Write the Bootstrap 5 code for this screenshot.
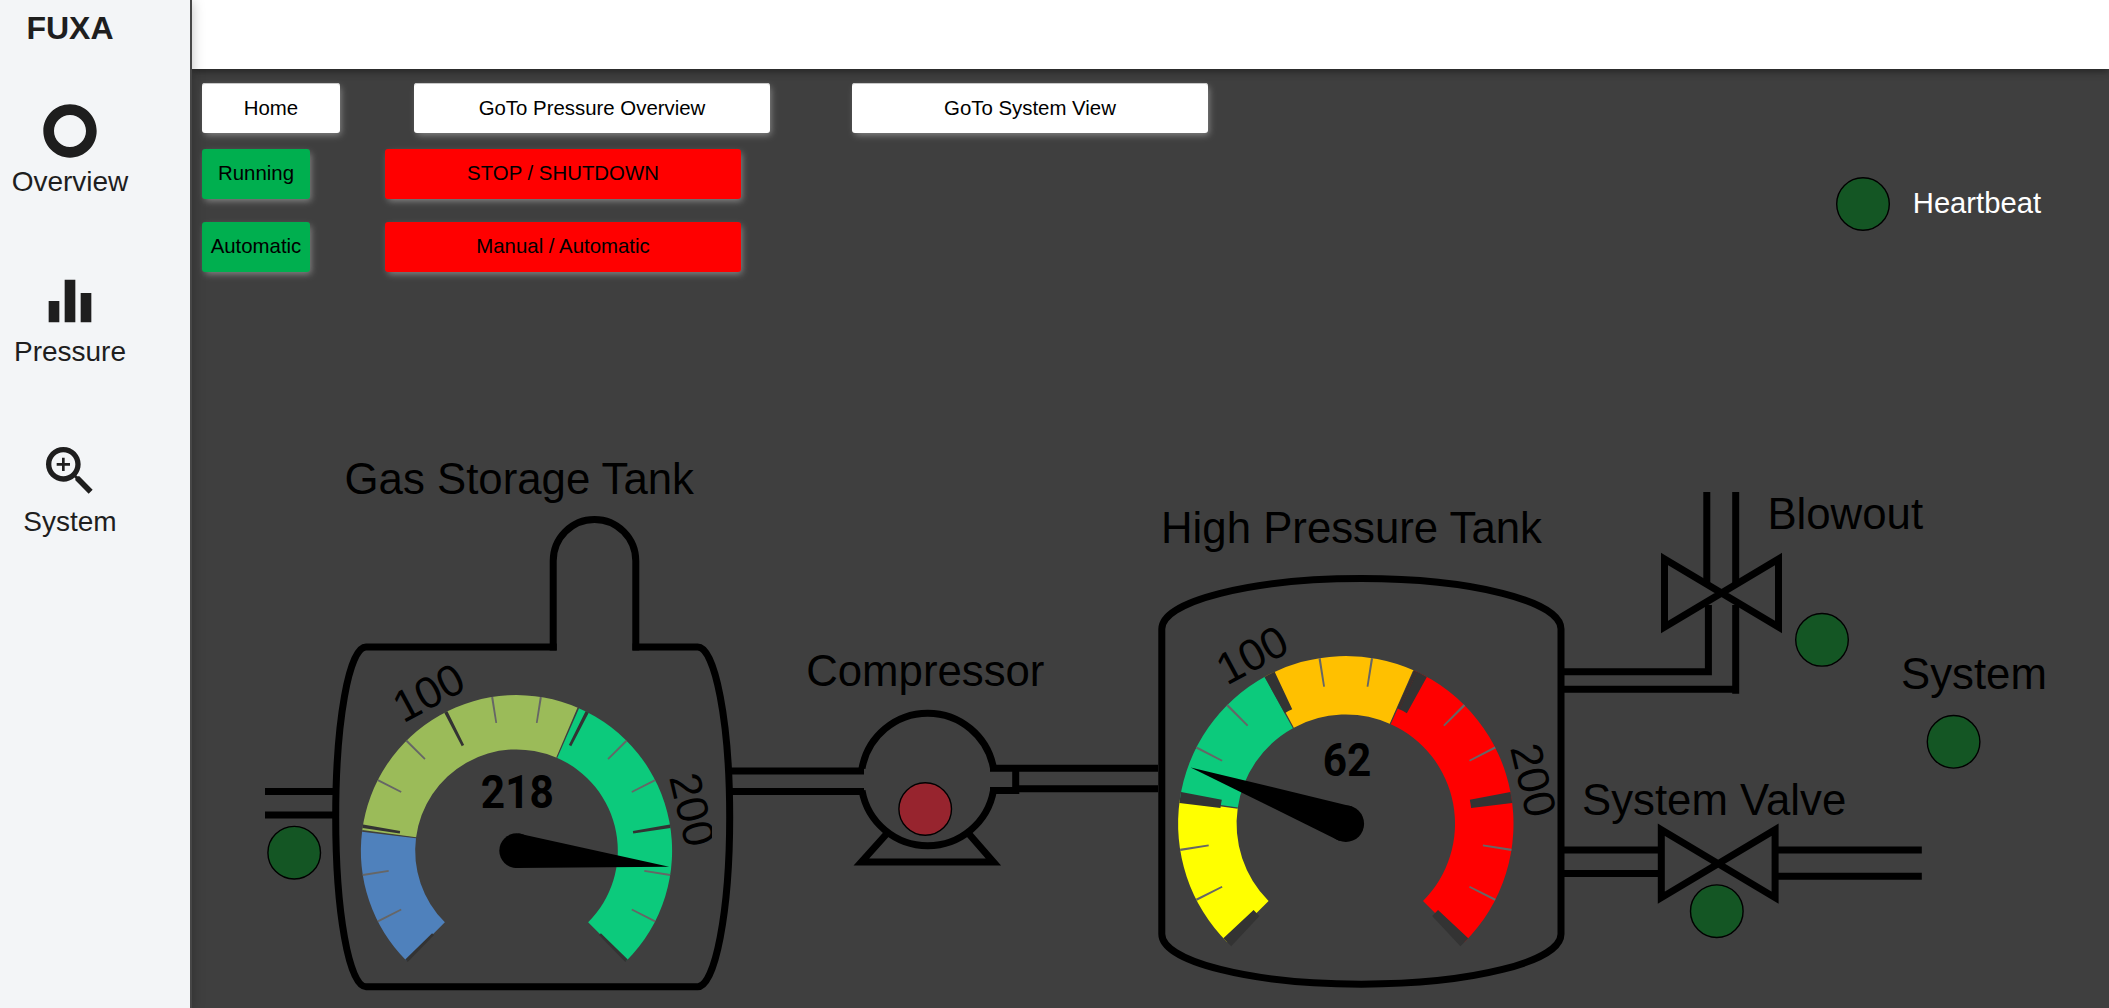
<!DOCTYPE html>
<html lang="en">
<head>
<meta charset="utf-8">
<meta name="viewport" content="width=device-width, initial-scale=1">
<title>FUXA</title>
<link href="https://cdn.jsdelivr.net/npm/bootstrap@5.3.0/dist/css/bootstrap.min.css" rel="stylesheet">
<style>
  body { font-family: "Liberation Sans", Arial, sans-serif; background: #3f3f3f; }
  .side-menu { width: 192px; background: #f3f5f7; border-right: 2px solid #474747; color: #1e1e1e; z-index: 3; box-shadow: 0 2px 12px rgba(0,0,0,.25); }
  .side-brand { width: 140px; height: 69px; font-size: 32px; line-height: 56px; }
  .side-item { width: 140px; height: 170px; padding-top: 30px; font-size: 28px; line-height: 38px; color: #1e1e1e; }
  .side-item svg { width: 64px; height: 64px; fill: #1e1e1e; }
  .top-strip { height: 69px; background: #fff; z-index: 2; box-shadow: 0 3px 6px -1px rgba(0,0,0,.25), 0 4px 7px rgba(0,0,0,.12), 0 1px 12px rgba(0,0,0,.1); }
  .controls { height: 221px; padding: 14px 0 0 10px; }
  .hmi-btn { height: 50px; border: 0; border-radius: 3px; padding: 0; font-size: 20.4px; line-height: 48px; color: #000; box-shadow: 2px 3px 7px -1px #888; }
  .hmi-btn:hover { color: #000; }
  .hmi-white { background: #fff; line-height: 50px; box-shadow: 2px 3px 7px -1px #888, inset 0 1px 0 #c8c8c8; }
  .hmi-green { background: #00af4f; padding-bottom: 2px; }
  .hmi-red { background: #f00; padding-bottom: 2px; }
  .w-home { width: 138px; } .w-state { width: 108px; } .w-wide { width: 356px; }
  .heartbeat { padding: 107px 68px 0 0; gap: 23px; color: #fff; font-size: 29.2px; line-height: 54px; }
  .heartbeat svg { margin-top: 1px; }
  .led { fill: #145624; stroke: #000; stroke-width: 1.4; }
  .led-fault { fill: #97242e; }
  .pipe { fill: none; stroke: #000; stroke-width: 7; }
  .diagram { width: 1917px; height: 718px; }
  .unit-name { font-size: 43.75px; }
  .gauge-value { font: 700 46.8px Roboto, sans-serif; text-anchor: middle; }
  .gauge-label { font-size: 44.2px; text-anchor: middle; }
</style>
<script src="https://cdn.jsdelivr.net/npm/bootstrap@5.3.0/dist/js/bootstrap.bundle.min.js"></script>
</head>
<body class="vh-100 overflow-hidden d-flex">
  <nav class="side-menu position-relative d-flex flex-column flex-shrink-0 vh-100">
    <div class="side-brand text-center fw-bold">FUXA</div>
    <a class="side-item d-flex flex-column align-items-center text-decoration-none" href="#">
      <svg viewBox="0 0 24 24"><path d="M12 2C6.48 2 2 6.48 2 12s4.48 10 10 10 10-4.48 10-10S17.52 2 12 2zm0 16c-3.31 0-6-2.69-6-6s2.69-6 6-6 6 2.69 6 6-2.69 6-6 6z"/></svg>Overview</a>
    <a class="side-item d-flex flex-column align-items-center text-decoration-none" href="#">
      <svg viewBox="0 0 24 24"><path d="M10 20h4V4h-4v16zm-6 0h4v-8H4v8zM16 9v11h4V9h-4z"/></svg>Pressure</a>
    <a class="side-item d-flex flex-column align-items-center text-decoration-none" href="#">
      <svg viewBox="0 0 24 24"><path d="M15.5 14h-.79l-.28-.27C15.41 12.59 16 11.11 16 9.5 16 5.91 13.09 3 9.5 3S3 5.91 3 9.5 5.91 16 9.5 16c1.61 0 3.09-.59 4.23-1.57l.27.28v.79l5 4.99L20.49 19l-4.99-5zm-6 0C7.01 14 5 11.99 5 9.5S7.01 5 9.5 5 14 7.01 14 9.5 11.99 14 9.5 14zM12 10h-2v2H9v-2H7V9h2V7h1v2h2v1z"/></svg>System</a>
  </nav>

  <main class="flex-grow-1 d-flex flex-column">
    <header class="top-strip position-relative flex-shrink-0"></header>

    <section class="d-flex justify-content-between flex-shrink-0">
      <div class="controls">
        <div class="d-flex" style="gap:74px;margin-bottom:16px">
          <button class="btn hmi-btn hmi-white w-home">Home</button>
          <button class="btn hmi-btn hmi-white w-wide">GoTo Pressure Overview</button>
          <button class="btn hmi-btn hmi-white w-wide" style="margin-left:8px">GoTo System View</button>
        </div>
        <div class="d-flex" style="gap:75px;margin-bottom:23px">
          <button class="btn hmi-btn hmi-green w-state">Running</button>
          <button class="btn hmi-btn hmi-red w-wide">STOP / SHUTDOWN</button>
        </div>
        <div class="d-flex" style="gap:75px">
          <button class="btn hmi-btn hmi-green w-state">Automatic</button>
          <button class="btn hmi-btn hmi-red w-wide">Manual / Automatic</button>
        </div>
      </div>
      <div class="heartbeat d-flex align-items-start">
        <svg width="54" height="54" viewBox="0 0 54 54"><circle class="led" cx="27" cy="27" r="26.3"/></svg>
        <span>Heartbeat</span>
      </div>
    </section>

    <svg class="diagram flex-shrink-0" viewBox="192 290 1917 718">
      <!-- gas storage tank -->
      <g class="pipe">
        <path d="M265 791.5H334M265 815H334"/>
        <path d="M556.7 647H366C349 647 335.7 722 335.7 817S349 986.7 366 986.7H697.7C715 986.7 729.7 912 729.7 817S715 647 697.7 647H632.5"/>
        <path d="M553.2 650.5V561A41.3 41.5 0 0 1 635.8 561V650.5"/>
        <path d="M730 771H864M730 791.5H864"/>
      </g>
      <!-- compressor -->
      <g class="pipe">
        <path d="M862 768.5A66.8 67 0 0 1 993.5 768.3M862 790.5A66.8 67 0 0 0 993.5 790.5"/>
        <path d="M990 768.3H1158M990 790.5H1019.3M1015.7 768V790.5M1019 788.7H1158"/>
        <path d="M886.5 834L861.4 862H993.4L969 834"/>
      </g>
      <!-- high pressure tank -->
      <g class="pipe">
        <path d="M1161.8 629A199.6 50.5 0 0 1 1561 629V934A199.6 50.2 0 0 1 1161.8 934Z"/>
        <path d="M1564 671.8H1708.4V605M1564 689.3H1735.7M1735.7 605V693.8"/>
        <path d="M1706.8 492V584M1735.7 492V584"/>
        <path d="M1664.5 559L1778.5 627V559L1664.5 627Z"/>
        <path d="M1564 850H1661M1564 873.5H1661M1775 850H1921.8M1775 876.3H1921.8"/>
        <path d="M1661.3 829.7L1775.1 897.7V829.7L1661.3 897.7Z"/>
      </g>
      <!-- gauge dials -->
      <g id="dialStorage"></g>
      <g id="dialPressure"></g>
      <text class="gauge-value" x="517.3" y="807.7" textLength="73" lengthAdjust="spacingAndGlyphs">218</text>
      <text class="gauge-value" x="1347" y="775.7" textLength="48.6" lengthAdjust="spacingAndGlyphs">62</text>
      <clipPath id="dialClip"><path d="M340 640H712V970H340Z"/></clipPath>
      <g class="gauge-label">
        <text transform="translate(435.6 706) rotate(-28.3)">100</text>
        <g clip-path="url(#dialClip)"><text transform="translate(677.6 813) rotate(76.7)">200</text></g>
        <text transform="translate(1259.3 668.3) rotate(-28.3)">100</text>
        <text transform="translate(1518.6 783.5) rotate(76.7)">200</text>
      </g>
      <!-- names -->
      <g class="unit-name">
        <text x="344.6" y="494">Gas Storage Tank</text>
        <text x="806.2" y="686">Compressor</text>
        <text x="1161" y="543">High Pressure Tank</text>
        <text x="1767.4" y="529.3">Blowout</text>
        <text x="1901" y="689">System</text>
        <text x="1582" y="815">System Valve</text>
      </g>
      <!-- state lamps -->
      <circle class="led" cx="294.2" cy="852.7" r="26.3"/>
      <circle class="led led-fault" cx="925.2" cy="809" r="26.3"/>
      <circle class="led" cx="1822" cy="639.8" r="26.3"/>
      <circle class="led" cx="1953.6" cy="741.8" r="26.3"/>
      <circle class="led" cx="1716.8" cy="911.2" r="26.3"/>
    </svg>
  </main>

<script>
  function dial(id, o) {
    var at = function (r, a) {
      a = a * Math.PI / 180;
      return (o.cx + r * Math.cos(a)).toFixed(2) + ' ' + (o.cy + r * Math.sin(a)).toFixed(2);
    };
    var wedge = function (r0, r1, a0, a1, fill) {
      return '<path fill="' + fill + '" d="M' + at(r1, a0) + 'A' + r1 + ' ' + r1 + ' 0 0 1 ' + at(r1, a1) +
        'L' + at(r0, a1) + 'A' + r0 + ' ' + r0 + ' 0 0 0 ' + at(r0, a0) + 'Z"/>';
    };
    var tick = function (r0, a, w) { return wedge(r0, o.outer, a - w / 2, a + w / 2, w < 1 ? '#666' : '#333'); };
    var s = '';
    o.zones.forEach(function (z, i) {
      s += wedge(o.inner, o.outer, z[0], z[1], z[2]);
      if (i) s += wedge(o.inner, o.outer, z[0] - 0.3, z[0] + 0.3, '#3f3f3f');
    });
    for (var k = 0; k <= 15; k++) {
      s += k % 3 ? tick(o.minor, 135 + 18 * k, 0.75) : tick(o.major, 135 + 18 * k, o.majorWidth);
    }
    s += o.extra ? wedge.apply(null, o.extra) : '';
    var n = o.needle;
    s += '<circle cx="' + n.cx + '" cy="' + o.cy + '" r="' + n.hub + '"/>' +
      '<path d="M' + at(n.hub, n.angle - 90) + 'L' + at(n.length, n.angle) + 'L' + at(n.hub, n.angle + 90) + 'Z"/>';
    document.getElementById(id).innerHTML = s;
  }
  dial('dialStorage', { cx: 516.5, cy: 850.7, outer: 155.6, inner: 101.3, minor: 129.4, major: 118, majorWidth: 1.3,
    zones: [[135, 187.3, '#4f81bc'], [187.3, 293.4, '#9bbb59'], [293.4, 405, '#0cca7c']],
    needle: { cx: 516.7, hub: 17.4, length: 153.5, angle: 6 } });
  dial('dialPressure', { cx: 1345.8, cy: 823.7, outer: 167.7, inner: 109.2, minor: 138.8, major: 126.3, majorWidth: 3.8,
    zones: [[135, 188.2, '#ff0'], [188.2, 241.3, '#0cca7c'], [241.3, 294, '#ffc000'], [294, 405, '#f00']],
    extra: [126.3, 167.7, 294, 295.2, '#38302f'],
    needle: { cx: 1345.8, hub: 18.3, length: 165, angle: 199.95 } });
</script>
</body>
</html>
